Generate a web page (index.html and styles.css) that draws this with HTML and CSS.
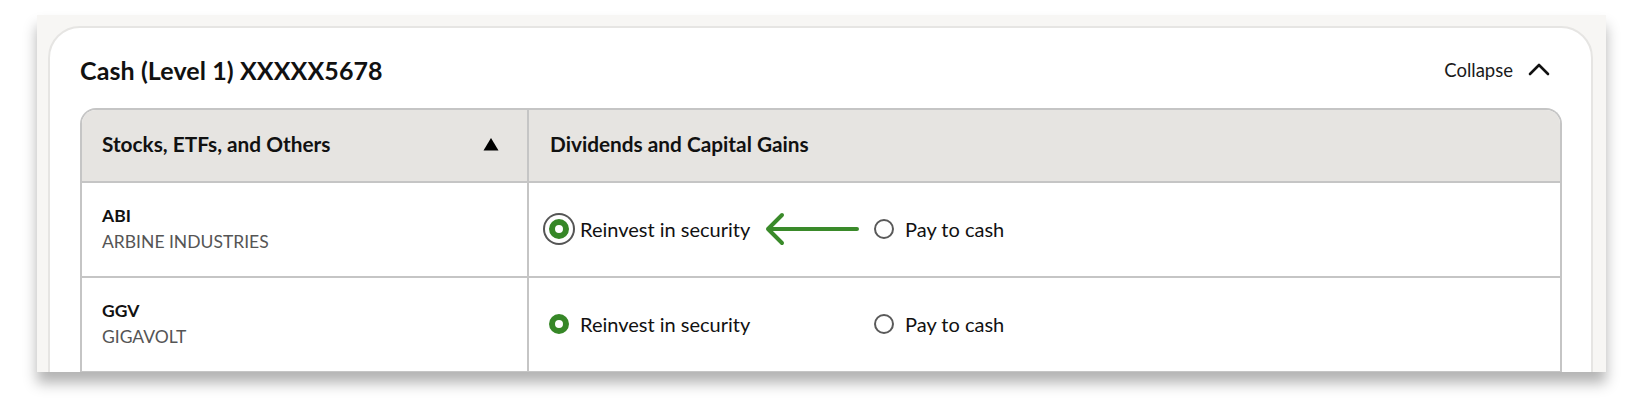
FILE: index.html
```html
<!DOCTYPE html>
<html lang="en">
<head>
<meta charset="utf-8">
<title>Cash (Level 1) XXXXX5678</title>
<link rel="stylesheet" href="styles.css">
</head>
<body>
<div class="frame">
  <section class="card">
    <header class="card-head">
      <h2 class="card-title">Cash (Level 1) XXXXX5678</h2>
      <button class="collapse" type="button">
        <span>Collapse</span>
        <svg class="chev" width="22" height="14" viewBox="0 0 22 14" aria-hidden="true"><path d="M2 12 L11 3 L20 12" fill="none" stroke="#111" stroke-width="2.6" stroke-linecap="round" stroke-linejoin="round"/></svg>
      </button>
    </header>
    <div class="table">
      <div class="th th-first">
        <span>Stocks, ETFs, and Others</span>
        <svg class="sort" width="16" height="14" viewBox="0 0 16 14" aria-hidden="true"><path d="M8 1 L15.5 13.5 L0.5 13.5 Z" fill="#000"/></svg>
      </div>
      <div class="th th-last">Dividends and Capital Gains</div>

      <div class="td td-first">
        <div class="sym">ABI</div>
        <div class="name">ARBINE INDUSTRIES</div>
      </div>
      <div class="td td-last">
        <label class="opt opt-first">
          <span class="radio checked focus"></span>
          <span class="lbl">Reinvest in security</span>
        </label>
        <label class="opt">
          <span class="radio"></span>
          <span class="lbl">Pay to cash</span>
        </label>
        <svg class="arrow" width="100" height="36" viewBox="0 0 100 36" aria-hidden="true"><path d="M3 18 H92 M3 18 L17 4 M3 18 L17 32" fill="none" stroke="#3a8a2a" stroke-width="4" stroke-linecap="round" stroke-linejoin="round"/></svg>
      </div>

      <div class="td td-first">
        <div class="sym">GGV</div>
        <div class="name">GIGAVOLT</div>
      </div>
      <div class="td td-last">
        <label class="opt opt-first">
          <span class="radio checked"></span>
          <span class="lbl">Reinvest in security</span>
        </label>
        <label class="opt">
          <span class="radio"></span>
          <span class="lbl">Pay to cash</span>
        </label>
      </div>
    </div>
  </section>
</div>
</body>
</html>
```
FILE: styles.css
```css
* { box-sizing: border-box; }
html, body { margin: 0; padding: 0; background: #fff; }
body {
  width: 1640px;
  height: 413px;
  overflow: hidden;
  font-family: "Lato", "Liberation Sans", sans-serif;
  color: #111;
  padding: 15px 0 0 37px;
}
.frame {
  width: 1569px;
  height: 357px;
  background: #f7f6f4;
  overflow: hidden;
  padding: 11px 0 0 11px;
  box-shadow: 0 11px 13px rgba(0,0,0,0.3);
}
.card {
  width: 1545px;
  height: 420px;
  background: #fff;
  border: 2px solid #e6e5e3;
  border-radius: 32px;
  padding: 0 29px 0 30px;
}
.card-head {
  display: flex;
  align-items: center;
  justify-content: space-between;
  height: 80px;
  padding: 4px 12px 0 0;
}
.card-title {
  margin: 0;
  font-size: 25px;
  font-weight: 700;
  letter-spacing: 0.1px;
  line-height: 30px;
  color: #111;
}
.collapse {
  display: flex;
  align-items: center;
  gap: 15px;
  background: none;
  border: 0;
  padding: 0;
  font-family: inherit;
  font-size: 18.5px;
  line-height: 24px;
  color: #1a1a1a;
}
.chev { display: block; margin-top: -2px; }
.table {
  display: grid;
  grid-template-columns: 447px 1fr;
  border: 2px solid #c5c5c5;
  border-bottom: 0;
  border-radius: 16px 16px 0 0;
  overflow: hidden;
}
.th {
  background: #e6e4e1;
  height: 73px;
  display: flex;
  align-items: center;
  font-size: 20.8px;
  line-height: 26px;
  font-weight: 700;
  color: #111;
  border-bottom: 2px solid #c5c5c5;
  padding-bottom: 3px;
}
.th-first {
  justify-content: space-between;
  padding: 0 28px 3px 20px;
  border-right: 2px solid #c5c5c5;
}
.sort { display: block; margin-top: 0; }
.th-last { padding-left: 21px; }
.td {
  height: 95px;
  border-bottom: 2px solid #c5c5c5;
}
.td-first {
  display: flex;
  flex-direction: column;
  justify-content: center;
  padding: 0 0 2px 20px;
  border-right: 2px solid #c5c5c5;
}
.sym {
  font-size: 17.5px;
  font-weight: 700;
  line-height: 26px;
  color: #111;
}
.name {
  font-size: 17.5px;
  line-height: 26px;
  color: #555;
}
.td-last {
  position: relative;
  display: flex;
  align-items: center;
  padding: 0 0 1px 20px;
}
.opt {
  display: flex;
  align-items: center;
  gap: 11px;
  font-size: 20px;
  line-height: 26px;
  color: #111;
}
.opt-first { width: 325px; }
.radio {
  width: 20px;
  height: 20px;
  border-radius: 50%;
  border: 2px solid #5a5a5a;
  background: #fff;
  flex: none;
}
.radio.checked {
  border: 6px solid #368727;
}
.radio.focus {
  box-shadow: 0 0 0 4px #fff, 0 0 0 6px #555;
}
.arrow {
  position: absolute;
  left: 236px;
  top: 28px;
}
```
